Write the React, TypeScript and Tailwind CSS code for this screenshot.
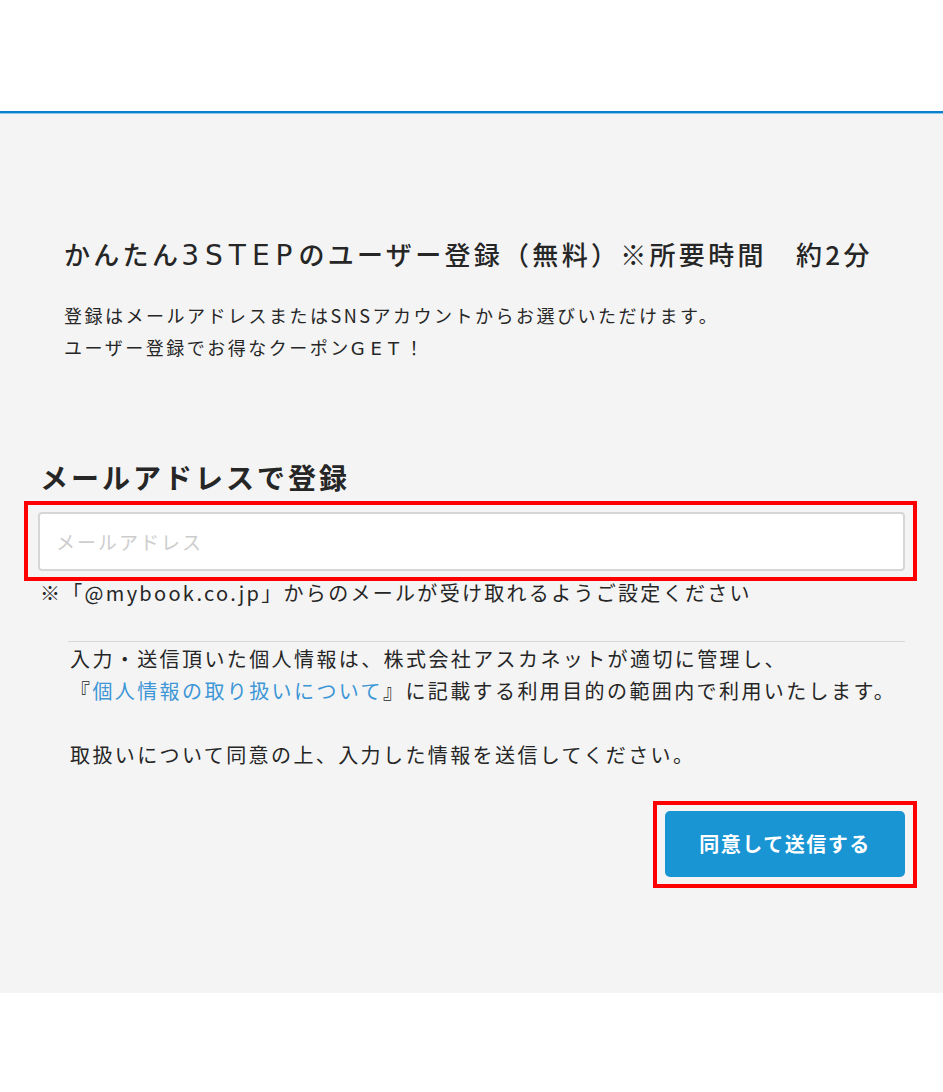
import React from 'react'

const jp = { fontFamily: '"Noto Sans CJK JP", "Noto Sans", sans-serif' }

export default function App(): JSX.Element {
  return (
    <div className="w-[943px] min-h-[1092px] bg-white text-[#262626]" style={jp}>
      {/* header area */}
      <div className="h-[111px] bg-white" />
      <div className="h-[2px] bg-[#0a80cc]" />
      <div className="h-[1px] bg-[#8ccaee]" />

      <section className="bg-[#f4f4f4] pt-[120px] pb-[105px]">
        <h1 className="ml-[64px] text-[26px] leading-[40px] font-medium tracking-[3.3px] whitespace-nowrap">
          かんたん<span className="font-['DejaVu_Sans',sans-serif] font-normal leading-none text-[28px] tracking-[6px]">3STEP</span>のユーザー登録（無料）※所要時間　約2分
        </h1>
        <p className="ml-[64px] mt-[25px] text-[18px] leading-[32px] tracking-[2.5px]">
          登録はメールアドレスまたはSNSアカウントからお選びいただけます。
          <br />
          ユーザー登録でお得なクーポン<span className="font-['DejaVu_Sans',sans-serif] leading-none tracking-[6px]">GET</span>！
        </p>

        <h2 className="ml-[40px] mt-[94px] text-[28px] leading-[40px] font-bold tracking-[3px]">
          メールアドレスで登録
        </h2>
        <div className="ml-[24px] mr-[26px] mt-[4px] border-4 border-[#ff0000] pl-[10px] pr-[8px] pt-[7px] pb-[6px]">
          <input
            type="email"
            placeholder="メールアドレス"
            className="w-full h-[59px] rounded-[4px] border-2 border-[#d6d6d6] bg-white px-[16px] text-[19px] tracking-[2px] placeholder:text-[#cdcdcd] outline-none"
            style={jp}
          />
        </div>
        <p className="ml-[40px] text-[20px] leading-[24px] tracking-[2.3px]">
          ※「@mybook.co.jp」からのメールが受け取れるようご設定ください
        </p>

        <div className="ml-[68px] mr-[38px] mt-[36px] h-[1px] bg-[#d8d8d8]" />
        <p className="ml-[70px] mt-[1px] text-[20px] leading-[32px] tracking-[2.4px]">
          入力・送信頂いた個人情報は、株式会社アスカネットが適切に管理し、
          <br />
          『<span className="text-[#3d96d6]">個人情報の取り扱いについて</span>』に記載する利用目的の範囲内で利用いたします。
          <br />
          <br />
          取扱いについて同意の上、入力した情報を送信してください。
        </p>

        <div className="mt-[30px] mr-[26px] flex justify-end">
          <div className="border-4 border-[#ff0000] px-[8px] pt-[6px] pb-[7px]">
            <button className="w-[240px] h-[66px] rounded-[5px] bg-[#1a95d3] text-white text-[20px] font-bold tracking-[1.5px]">
              同意して送信する
            </button>
          </div>
        </div>
      </section>

      <div className="h-[99px] bg-white" />
    </div>
  )
}
